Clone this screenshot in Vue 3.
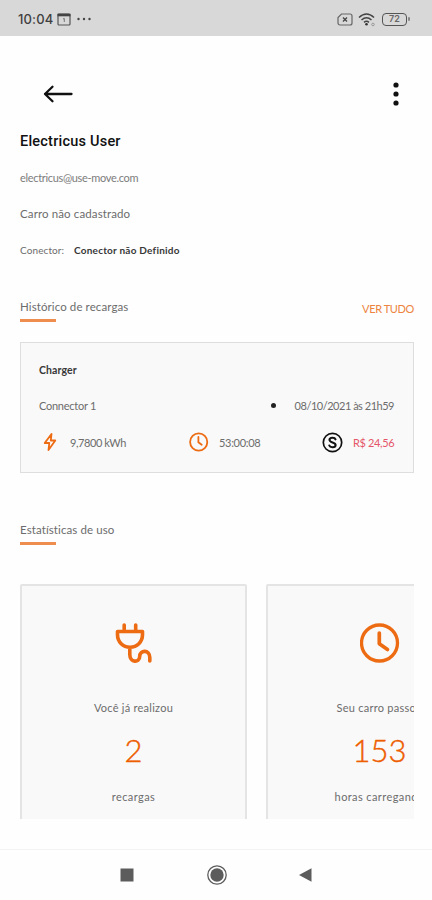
<script setup>
const stats = [
  { icon: 'plug', lead: 'Você já realizou', value: '2', unit: 'recargas' },
  { icon: 'clock', lead: 'Seu carro passou', value: '153', unit: 'horas carregando' },
]
</script>

<template>
  <div class="screen">
    <header class="status">
      <div class="status-left">
        <span class="time">10:04</span>
        <svg class="calendar" width="14" height="13" viewBox="0 0 14 13">
          <rect x="1" y="1" width="12" height="11" rx="1" fill="none" stroke="#555" stroke-width="1.2" />
          <path d="M.5 2h13" stroke="#444" stroke-width="2.6" />
          <path d="M6 6l1.300-.6V9" fill="none" stroke="#777" />
        </svg>
        <svg width="15" height="4" viewBox="0 0 15 4" fill="#444">
          <circle cx="1.500" cy="2" r="1.200" /><circle cx="7" cy="2" r="1.200" /><circle cx="12.500" cy="2" r="1.200" />
        </svg>
      </div>
      <div class="status-right">
        <svg width="16" height="13" viewBox="0 0 16 13" fill="none" stroke="#666">
          <path d="M4.500 1H13a2 2 0 0 1 2 2v7a2 2 0 0 1-2 2H3a2 2 0 0 1-2-2V4.500z" stroke-width="1.200" />
          <path d="M6 4.500l4 4m0-4l-4 4" stroke="#444" stroke-width="1.300" />
        </svg>
        <svg width="18" height="15" viewBox="0 0 18 15" fill="none" stroke="#444">
          <path d="M1 5.500Q8.500-1.500 16 5.500M3.500 8q5-4.500 10 0M6 10.300q2.500-2 5 0" stroke-width="1.500" />
          <circle cx="8.500" cy="12.300" r="1.300" fill="#333" stroke="none" />
          <circle cx="15" cy="12.500" r="1.300" stroke="#999" />
        </svg>
        <div class="battery"><span>72</span></div>
      </div>
    </header>

    <nav class="topbar">
      <svg class="back" width="30" height="18" viewBox="0 0 30 18" fill="none" stroke="#111" stroke-width="2.300" stroke-linecap="round" stroke-linejoin="round">
        <path d="M28.500 9H2M9.500 1.700L2 9L9.500 16.300" />
      </svg>
      <svg class="more" width="6" height="24" viewBox="0 0 6 24" fill="#111">
        <circle cx="3" cy="3" r="2.600" /><circle cx="3" cy="12" r="2.600" /><circle cx="3" cy="21" r="2.600" />
      </svg>
    </nav>

    <section class="profile">
      <h1>Electricus User</h1>
      <p class="email">electricus@use-move.com</p>
      <p class="car">Carro não cadastrado</p>
      <p class="conn"><span class="conn-label">Conector:</span><strong>Conector não Definido</strong></p>
    </section>

    <section class="history">
      <div class="section-head">
        <h2>Histórico de recargas</h2>
        <a class="all">VER TUDO</a>
      </div>
      <article class="charge">
        <div class="charger"><strong>Charger</strong></div>
        <div class="line">
          <span class="connector">Connector 1</span>
          <i class="bullet"></i>
          <span class="date">08/10/2021 às 21h59</span>
        </div>
        <div class="metrics">
          <div class="metric energy">
            <svg class="bolt" width="14" height="18" viewBox="0 0 14 18" fill="none" stroke="#ed6b12" stroke-width="1.800" stroke-linejoin="round">
              <path d="M8.500 1L1.700 10H6.300L5.500 17L12.300 7.500H7.800z" />
            </svg>
            <span class="kwh">9,7800 kWh</span>
          </div>
          <div class="metric">
            <svg width="20" height="20" viewBox="0 0 20 20" fill="none" stroke="#ed6b12" stroke-width="1.800" stroke-linecap="round" stroke-linejoin="round">
              <circle cx="9.700" cy="10" r="8.600" /><path d="M9.400 5v5.200l3.300 2.600" />
            </svg>
            <span class="duration">53:00:08</span>
          </div>
          <div class="metric">
            <svg width="21" height="21" viewBox="0 0 21 21" fill="none" stroke="#111" stroke-linecap="round">
              <circle cx="10.500" cy="10.500" r="9.200" stroke-width="1.700" />
              <path d="M13.500 7.300C12.700 5.100 7.600 5.100 7.500 7.900C7.400 11 13.700 9.900 13.600 13C13.500 16 8.100 15.900 7.300 13.500" stroke-width="2.100" />
            </svg>
            <span class="price">R$ 24,56</span>
          </div>
        </div>
      </article>
    </section>

    <section class="usage">
      <div class="section-head">
        <h2>Estatísticas de uso</h2>
      </div>
      <div class="stats">
        <article v-for="s in stats" :key="s.icon" class="stat">
          <svg v-if="s.icon === 'plug'" width="40" height="42" viewBox="0 0 40 42" fill="none" stroke="#ed6b12" stroke-width="3.600" stroke-linecap="round" stroke-linejoin="round">
            <path d="M10.200 3v6M21.700 3v6M3.500 9.500H28.500V12.500C28.500 20 23 25.200 16 25.200S3.500 20 3.500 12.500zM15.800 25.500V32.500C15.800 41 25.700 41 25.700 34.500C25.700 27.500 35.800 27.500 35.800 35.500V39" />
          </svg>
          <svg v-else width="40" height="42" viewBox="0 0 40 42" fill="none" stroke="#ed6b12" stroke-width="3.300" stroke-linecap="round" stroke-linejoin="round">
            <circle cx="19.500" cy="21" r="18" /><path d="M19.300 11v10.700l8.200 5.800" stroke-width="3.700" />
          </svg>
          <span class="lead">{{ s.lead }}</span>
          <span class="value">{{ s.value }}</span>
          <span class="unit">{{ s.unit }}</span>
        </article>
      </div>
    </section>

    <footer class="sysnav">
      <svg width="14" height="14" viewBox="0 0 14 14"><rect x=".5" y=".5" width="13" height="13" fill="#5c5c5c" /></svg>
      <svg width="20" height="20" viewBox="0 0 20 20"><circle cx="10" cy="10" r="9.200" fill="none" stroke="#5c5c5c" stroke-width="1.300" /><circle cx="10" cy="10" r="6.700" fill="#5c5c5c" /></svg>
      <svg width="13" height="14" viewBox="0 0 13 14"><path d="M0 7L12.500 .3V13.700z" fill="#5c5c5c" /></svg>
    </footer>
  </div>
</template>

<style>
body { margin: 0; background: #fff; }
</style>

<style scoped>
.screen { box-sizing: border-box; width: 432px; height: 900px; overflow: hidden; display: flex; flex-direction: column; background: #fefefe; font-family: Lato, sans-serif; font-variant-ligatures: none; color: #6c6c6c; font-size: 11px; white-space: nowrap; }
h1, h2, p { margin: 0; font-weight: 400; }
svg { display: block; flex: none; }
.status { height: 36px; flex: none; box-sizing: border-box; padding: 2px 22px 0 18px; background: #d8d8d8; display: flex; justify-content: space-between; align-items: center; }
.status-left, .status-right { display: flex; align-items: center; }
.time { font: 500 13px/18px Inter, sans-serif; letter-spacing: .15px; color: #3f3f3f; width: 39px; }
.calendar { margin-right: 6px; }
.status-right { gap: 5px; }
.battery { position: relative; box-sizing: border-box; width: 25px; height: 13px; margin: 0 3px 0 1px; border: 1.500px solid #555; border-radius: 4px; display: flex; align-items: center; justify-content: center; font: 600 9px/10px Inter, sans-serif; color: #666; }
.battery::after { content: ""; position: absolute; right: -4px; top: 3px; width: 2px; height: 4px; background: #888; border-radius: 1px; }
.topbar { height: 88px; flex: none; box-sizing: border-box; padding: 46px 33px 0 43px; display: flex; justify-content: space-between; align-items: flex-start; }
.back { margin-top: 3px; }
.profile { padding-left: 20px; height: 145px; flex: none; }
.profile h1, .profile p { display: flex; align-items: center; height: 36px; }
.profile h1 { font: 500 14.500px/38px Roboto, sans-serif; letter-spacing: .22px; color: #111; }
.profile .email { font-size: 11px; height: 35px; letter-spacing: -.33px; color: #7c7c7c; }
.car { font-size: 11.500px; letter-spacing: .12px; }
.profile .conn { font-size: 10px; height: 38px; letter-spacing: .1px; }
.conn-label { width: 54px; }
.conn strong { color: #383838; font-weight: 700; letter-spacing: .23px; }
.history { padding: 27px 18px 0 20px; height: 231px; box-sizing: border-box; flex: none; }
.section-head { display: flex; justify-content: space-between; height: 46px; }
.section-head h2 { font-size: 11.500px; line-height: 22px; letter-spacing: .1px; }
.section-head h2::after { content: ""; display: block; width: 36px; height: 3px; margin-top: 1px; background: #ee8d4d; }
.all { font-size: 11px; line-height: 26px; letter-spacing: -.38px; color: #ed8440; }
.charge { box-sizing: border-box; height: 131px; padding: 10px 19px 0 18px; border: 1px solid #dedede; background: #f9f9f9; }
.charger { height: 35px; line-height: 35px; font-size: 10.500px; letter-spacing: .1px; color: #383838; }
.line { height: 35px; display: flex; align-items: center; }
.connector { flex: 1; letter-spacing: -.25px; }
.bullet { width: 5px; height: 5px; border-radius: 50%; background: #222; margin-right: 19px; }
.date { letter-spacing: -.48px; }
.metrics { height: 38px; display: grid; grid-template-columns: 150px 133px auto; }
.metric { display: flex; align-items: center; gap: 10px; }
.energy { gap: 9px; }
.bolt { margin: 0 4px; }
.kwh { letter-spacing: -.42px; }
.duration { letter-spacing: -.3px; }
.price { color: #e5566a; letter-spacing: -.35px; }
.usage { padding: 19px 18px 0 20px; height: 320px; box-sizing: border-box; flex: none; }
.usage .section-head { height: 65px; }
.stats { display: flex; gap: 19px; overflow: hidden; height: 235px; }
.stat { box-sizing: border-box; flex: none; width: 227px; height: 260px; padding-top: 36px; border: 2px solid #e4e4e4; border-radius: 2px; background: #f9f9f9; display: flex; flex-direction: column; align-items: center; }
.lead { font-size: 11px; line-height: 20px; margin-top: 34px; letter-spacing: .25px; }
.value { font-size: 31px; font-weight: 300; line-height: 40px; margin-top: 12px; color: #ee5d00; -webkit-text-stroke: .4px #ee5d00; }
.unit { font-size: 11px; line-height: 20px; margin-top: 17px; letter-spacing: .4px; }
.sysnav { height: 51px; margin-top: auto; box-sizing: border-box; border-top: 1px solid #f3f3f3; flex: none; display: flex; align-items: center; padding: 0 120px; justify-content: space-between; }
</style>
